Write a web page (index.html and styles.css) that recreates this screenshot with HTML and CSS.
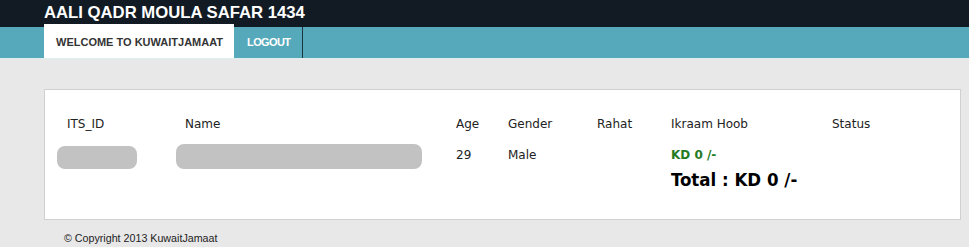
FILE: index.html
```html
<!DOCTYPE html>
<html lang="en">
<head>
  <meta charset="UTF-8" />
  <title>Aali Qadr Moula Safar 1434</title>
  <link rel="stylesheet" href="styles.css">
</head>
<body>
  <header class="topbar">
    <h1 class="site-title">AALI QADR MOULA SAFAR 1434</h1>
  </header>

  <nav class="menu">
    <a class="menu-item active" href="#">WELCOME TO KUWAITJAMAAT</a>
    <a class="menu-item logout" href="#">LOGOUT</a>
  </nav>

  <main>
    <div class="card">
      <div class="grid head">
        <span>ITS_ID</span>
        <span>Name</span>
        <span>Age</span>
        <span>Gender</span>
        <span>Rahat</span>
        <span>Ikraam Hoob</span>
        <span>Status</span>
      </div>
      <div class="grid row">
        <span><i class="blur blur-id"></i></span>
        <span><i class="blur blur-name"></i></span>
        <span>29</span>
        <span>Male</span>
        <span></span>
        <span class="amount">KD 0 /-</span>
        <span></span>
      </div>
      <div class="grid total-row">
        <span class="total">Total : KD 0 /-</span>
      </div>
    </div>
    <div class="footer">&copy; Copyright 2013 KuwaitJamaat</div>
  </main>
</body>
</html>
```

FILE: styles.css
```css
body {
  margin: 0;
  font-family: "Liberation Sans", Arial, sans-serif;
  background-color: #e8e8e8;
  color: #222;
}
.topbar {
  height: 27px;
  background-color: #121b24;
  padding-left: 44px;
}
.site-title {
  margin: 0;
  font-size: 16.7px;
  line-height: 26px;
  font-weight: bold;
  color: #ffffff;
}
.menu {
  display: flex;
  height: 31px;
  background-color: #56a8bb;
  padding-left: 44px;
  border-bottom: 1px solid #dcefee;
}
.menu-item {
  display: block;
  padding: 0 12px 0 13px;
  font-size: 11px;
  font-weight: bold;
  line-height: 31px;
  color: #ffffff;
  text-decoration: none;
  white-space: nowrap;
  border-right: 1px solid #1d3440;
}
.logout {
  letter-spacing: -0.6px;
}
.menu-item.active {
  margin-top: -3px;
  padding: 0 11px 0 12px;
  line-height: 37px;
  height: 34px;
  background-color: #ffffff;
  color: #333;
  border-right: none;
}
main {
  padding: 30px 8px 0 44px;
}
.card {
  background-color: #ffffff;
  border: 1px solid #d0d0d0;
  height: 131px;
  padding-top: 25px;
  box-sizing: border-box;
}
.grid {
  display: grid;
  grid-template-columns: 118px 271px 52px 89px 74px 161px 1fr;
  padding-left: 22px;
  font-family: "DejaVu Sans", Verdana, sans-serif;
  font-size: 12px;
  align-items: center;
}
.head {
  height: 18px;
  color: #222;
}
.row {
  height: 27px;
  margin-top: 9px;
  align-items: start;
  line-height: 26px;
}
.blur {
  display: block;
  background-color: #c2c2c2;
  border-radius: 8px;
}
.blur-id {
  margin: 4px 0 0 -10px;
  width: 80px;
  height: 23px;
}
.blur-name {
  margin: 2px 0 0 -9px;
  width: 246px;
  height: 25px;
}
.amount {
  font-weight: bold;
  color: #237a23;
}
.total {
  grid-column: 6 / 8;
  font-family: "DejaVu Sans Condensed", "DejaVu Sans", sans-serif;
  font-size: 18.5px;
  font-weight: bold;
  color: #000;
}
.footer {
  padding: 12px 0 0 20px;
  font-size: 10.7px;
  color: #222;
}
```
